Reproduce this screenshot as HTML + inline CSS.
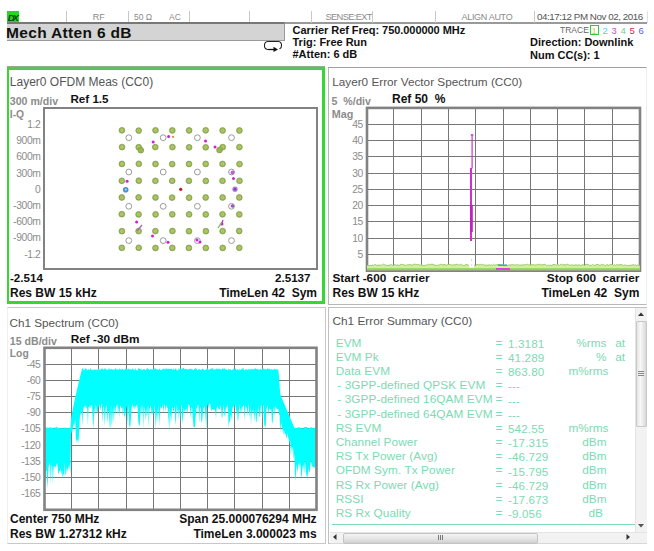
<!DOCTYPE html>
<html><head><meta charset="utf-8"><style>
html,body{margin:0;padding:0;background:#fff;width:654px;height:551px;overflow:hidden;position:relative;}
body{font-family:"Liberation Sans",sans-serif;}
.t{position:absolute;white-space:pre;}
</style></head><body>
<div style="position:absolute;left:7px;top:11px;width:640px;height:11px;background:#fff;"></div>
<div style="position:absolute;left:7px;top:22px;width:640px;height:1.5px;background:#9a9a9a;"></div>
<div style="position:absolute;left:7px;top:11px;width:12px;height:12.3px;background:#26d826;"></div>
<div class="t" style="left:7.8px;top:13.0px;font-size:9.5px;line-height:9.5px;font-weight:bold;color:#0b4a0b;letter-spacing:-2.2px;font-style:italic;">DX</div>
<div style="position:absolute;left:66.4px;top:11px;width:1px;height:11.5px;background:#c8c8c8;"></div>
<div style="position:absolute;left:128.4px;top:11px;width:1px;height:11.5px;background:#c8c8c8;"></div>
<div style="position:absolute;left:189.4px;top:11px;width:1px;height:11.5px;background:#c8c8c8;"></div>
<div style="position:absolute;left:249.4px;top:11px;width:1px;height:11.5px;background:#c8c8c8;"></div>
<div style="position:absolute;left:311.2px;top:11px;width:1px;height:11.5px;background:#c8c8c8;"></div>
<div style="position:absolute;left:372px;top:11px;width:1px;height:11.5px;background:#c8c8c8;"></div>
<div style="position:absolute;left:434.5px;top:11px;width:1px;height:11.5px;background:#c8c8c8;"></div>
<div style="position:absolute;left:534.3px;top:11px;width:1px;height:11.5px;background:#c8c8c8;"></div>
<div style="position:absolute;left:646.5px;top:11px;width:1px;height:12px;background:#e0e0e0;"></div>
<div class="t" style="left:92.7px;top:12.9px;font-size:9px;line-height:9px;font-weight:normal;color:#8a8a8a;">RF</div>
<div class="t" style="left:134.0px;top:13.0px;font-size:8.5px;line-height:8.5px;font-weight:normal;color:#8a8a8a;">50 &Omega;</div>
<div class="t" style="left:169.0px;top:13.0px;font-size:8.5px;line-height:8.5px;font-weight:normal;color:#8a8a8a;">AC</div>
<div class="t" style="left:325.5px;top:12.7px;font-size:9.3px;line-height:9.3px;font-weight:normal;color:#8a8a8a;letter-spacing:-0.65px;">SENSE:EXT</div>
<div class="t" style="left:461.5px;top:12.9px;font-size:9px;line-height:9px;font-weight:normal;color:#8a8a8a;letter-spacing:-0.3px;">ALIGN AUTO</div>
<div class="t" style="left:537.0px;top:11.8px;font-size:9.8px;line-height:9.8px;font-weight:normal;color:#555;letter-spacing:-0.45px;">04:17:12 PM Nov 02, 2016</div>
<div style="position:absolute;left:7px;top:22.3px;width:278px;height:18.7px;background:#d4d4d4;border-top:2.4px solid #787878;border-bottom:1.5px solid #9a9a9a;border-right:1.5px solid #9a9a9a;box-sizing:border-box;"></div>
<div class="t" style="left:6.0px;top:24.9px;font-size:15.5px;line-height:15.5px;font-weight:bold;color:#111;letter-spacing:0.33px;">Mech Atten 6 dB</div>
<svg style="position:absolute;left:263px;top:40px" width="22" height="12" viewBox="0 0 22 12"><path d="M6 9.5 H4.5 A3.5 3.5 0 0 1 1.5 5.5 A3.5 3.5 0 0 1 4.5 1.5 H15.5 A3.5 3.5 0 0 1 18.5 5.5 A3.5 3.5 0 0 1 16.5 9" fill="none" stroke="#222" stroke-width="1.1"/><path d="M5.5 9.5 H11" stroke="#111" stroke-width="1.3"/><path d="M10.5 6.8 L15 9.5 L10.5 12 Z" fill="#111"/></svg>
<div class="t" style="left:292.5px;top:24.5px;font-size:11px;line-height:11px;font-weight:bold;color:#111;letter-spacing:-0.05px;">Carrier Ref Freq: 750.000000 MHz</div>
<div class="t" style="left:292.5px;top:36.7px;font-size:11px;line-height:11px;font-weight:bold;color:#111;">Trig: Free Run</div>
<div class="t" style="left:292.5px;top:49.4px;font-size:11px;line-height:11px;font-weight:bold;color:#111;">#Atten: 6 dB</div>
<div class="t" style="left:560.0px;top:26.3px;font-size:8.5px;line-height:8.5px;font-weight:normal;color:#666;">TRACE</div>
<div style="position:absolute;left:589.5px;top:24.5px;width:9px;height:10px;border:1.5px solid #33cc33;box-sizing:border-box;"></div>
<div class="t" style="left:591.5px;top:25.5px;font-size:9.5px;line-height:9.5px;font-weight:normal;color:#d8c860;">1</div>
<div class="t" style="left:602.5px;top:25.5px;font-size:9.5px;line-height:9.5px;font-weight:normal;color:#60c8e0;">2</div>
<div class="t" style="left:611.5px;top:25.5px;font-size:9.5px;line-height:9.5px;font-weight:normal;color:#d050c0;">3</div>
<div class="t" style="left:620.5px;top:25.5px;font-size:9.5px;line-height:9.5px;font-weight:normal;color:#70d0a0;">4</div>
<div class="t" style="left:629.5px;top:25.5px;font-size:9.5px;line-height:9.5px;font-weight:normal;color:#c03050;">5</div>
<div class="t" style="left:638.5px;top:25.5px;font-size:9.5px;line-height:9.5px;font-weight:normal;color:#6060d0;">6</div>
<div class="t" style="left:530.0px;top:37.3px;font-size:11px;line-height:11px;font-weight:bold;color:#111;">Direction: Downlink</div>
<div class="t" style="left:530.0px;top:50.0px;font-size:11px;line-height:11px;font-weight:bold;color:#111;">Num CC(s): 1</div>
<div style="position:absolute;left:7px;top:66px;width:318px;height:237.5px;border:3px solid #33d833;border-left-width:2.5px;border-top:4px solid #58c458;box-sizing:border-box;"></div>
<div style="position:absolute;left:7px;top:66px;width:318px;height:1px;background:#90b090;"></div>
<div style="position:absolute;left:328px;top:66.5px;width:319px;height:238px;border:1.2px solid #b8b8b8;border-top:1.5px solid #a0a0a0;border-right-color:#eeeeee;box-sizing:border-box;"></div>
<div style="position:absolute;left:7px;top:306.5px;width:318.5px;height:237px;border:1.2px solid #c8c8c8;border-left-color:#f0f0f0;box-sizing:border-box;"></div>
<div style="position:absolute;left:328px;top:306.5px;width:319px;height:237px;border:1.2px solid #c0c0c0;box-sizing:border-box;"></div>
<div class="t" style="left:9.8px;top:76.1px;font-size:12px;line-height:12px;font-weight:normal;color:#555;">Layer0 OFDM Meas (CC0)</div>
<div class="t" style="left:9.8px;top:96.0px;font-size:10.6px;line-height:10.6px;font-weight:bold;color:#8c8c8c;">300 m/div</div>
<div class="t" style="left:9.8px;top:109.6px;font-size:10.3px;line-height:10.3px;font-weight:bold;color:#8c8c8c;">I-Q</div>
<div class="t" style="left:70.5px;top:92.9px;font-size:11.6px;line-height:11.6px;font-weight:bold;color:#111;">Ref 1.5</div>
<div style="position:absolute;left:43.2px;top:107.2px;width:274.8px;height:163.3px;border:2.8px solid #828282;box-sizing:border-box;background:#fff;"></div>
<div class="t" style="right:613.5px;top:119.8px;font-size:10.3px;line-height:10.3px;font-weight:normal;color:#8c8c8c;letter-spacing:-0.35px;">1.2</div>
<div class="t" style="right:613.5px;top:136.0px;font-size:10.3px;line-height:10.3px;font-weight:normal;color:#8c8c8c;letter-spacing:-0.35px;">900m</div>
<div class="t" style="right:613.5px;top:152.2px;font-size:10.3px;line-height:10.3px;font-weight:normal;color:#8c8c8c;letter-spacing:-0.35px;">600m</div>
<div class="t" style="right:613.5px;top:168.5px;font-size:10.3px;line-height:10.3px;font-weight:normal;color:#8c8c8c;letter-spacing:-0.35px;">300m</div>
<div class="t" style="right:613.5px;top:184.7px;font-size:10.3px;line-height:10.3px;font-weight:normal;color:#8c8c8c;letter-spacing:-0.35px;">0</div>
<div class="t" style="right:613.5px;top:200.9px;font-size:10.3px;line-height:10.3px;font-weight:normal;color:#8c8c8c;letter-spacing:-0.35px;">-300m</div>
<div class="t" style="right:613.5px;top:217.1px;font-size:10.3px;line-height:10.3px;font-weight:normal;color:#8c8c8c;letter-spacing:-0.35px;">-600m</div>
<div class="t" style="right:613.5px;top:233.3px;font-size:10.3px;line-height:10.3px;font-weight:normal;color:#8c8c8c;letter-spacing:-0.35px;">-900m</div>
<div class="t" style="right:613.5px;top:249.6px;font-size:10.3px;line-height:10.3px;font-weight:normal;color:#8c8c8c;letter-spacing:-0.35px;">-1.2</div>
<div class="t" style="left:10.0px;top:272.4px;font-size:11.6px;line-height:11.6px;font-weight:bold;color:#111;">-2.514</div>
<div class="t" style="right:343.5px;top:272.4px;font-size:11.6px;line-height:11.6px;font-weight:bold;color:#111;">2.5137</div>
<div class="t" style="left:10.0px;top:287.3px;font-size:12px;line-height:12px;font-weight:bold;color:#111;">Res BW 15 kHz</div>
<div class="t" style="right:337.0px;top:287.4px;font-size:12px;line-height:12px;font-weight:bold;color:#111;">TimeLen 42&nbsp; Sym</div>
<svg style="position:absolute;left:0;top:0" width="654" height="551"><circle cx="121.9" cy="130.3" r="2.9" fill="#9ab652" stroke="#7f9a4a" stroke-width="0.7"/><circle cx="121.9" cy="130.3" r="1.2" fill="none" stroke="#c0d880" stroke-width="0.7"/><circle cx="122.0" cy="147.1" r="2.9" fill="#9ab652" stroke="#7f9a4a" stroke-width="0.7"/><circle cx="122.0" cy="147.1" r="1.2" fill="none" stroke="#c0d880" stroke-width="0.7"/><circle cx="121.9" cy="163.9" r="2.9" fill="#9ab652" stroke="#7f9a4a" stroke-width="0.7"/><circle cx="121.9" cy="163.9" r="1.2" fill="none" stroke="#c0d880" stroke-width="0.7"/><circle cx="121.8" cy="180.8" r="2.9" fill="#9ab652" stroke="#7f9a4a" stroke-width="0.7"/><circle cx="121.8" cy="180.8" r="1.2" fill="none" stroke="#c0d880" stroke-width="0.7"/><circle cx="121.8" cy="197.5" r="2.9" fill="#9ab652" stroke="#7f9a4a" stroke-width="0.7"/><circle cx="121.8" cy="197.5" r="1.2" fill="none" stroke="#c0d880" stroke-width="0.7"/><circle cx="121.8" cy="214.2" r="2.9" fill="#9ab652" stroke="#7f9a4a" stroke-width="0.7"/><circle cx="121.8" cy="214.2" r="1.2" fill="none" stroke="#c0d880" stroke-width="0.7"/><circle cx="121.9" cy="231.2" r="2.9" fill="#9ab652" stroke="#7f9a4a" stroke-width="0.7"/><circle cx="121.9" cy="231.2" r="1.2" fill="none" stroke="#c0d880" stroke-width="0.7"/><circle cx="121.8" cy="247.8" r="2.9" fill="#9ab652" stroke="#7f9a4a" stroke-width="0.7"/><circle cx="121.8" cy="247.8" r="1.2" fill="none" stroke="#c0d880" stroke-width="0.7"/><circle cx="138.7" cy="130.6" r="2.9" fill="#9ab652" stroke="#7f9a4a" stroke-width="0.7"/><circle cx="138.7" cy="130.6" r="1.2" fill="none" stroke="#c0d880" stroke-width="0.7"/><circle cx="138.7" cy="147.2" r="2.9" fill="#9ab652" stroke="#7f9a4a" stroke-width="0.7"/><circle cx="138.7" cy="147.2" r="1.2" fill="none" stroke="#c0d880" stroke-width="0.7"/><circle cx="138.8" cy="163.8" r="2.9" fill="#9ab652" stroke="#7f9a4a" stroke-width="0.7"/><circle cx="138.8" cy="163.8" r="1.2" fill="none" stroke="#c0d880" stroke-width="0.7"/><circle cx="138.8" cy="180.7" r="2.9" fill="#9ab652" stroke="#7f9a4a" stroke-width="0.7"/><circle cx="138.8" cy="180.7" r="1.2" fill="none" stroke="#c0d880" stroke-width="0.7"/><circle cx="138.6" cy="197.4" r="2.9" fill="#9ab652" stroke="#7f9a4a" stroke-width="0.7"/><circle cx="138.6" cy="197.4" r="1.2" fill="none" stroke="#c0d880" stroke-width="0.7"/><circle cx="138.6" cy="214.4" r="2.9" fill="#9ab652" stroke="#7f9a4a" stroke-width="0.7"/><circle cx="138.6" cy="214.4" r="1.2" fill="none" stroke="#c0d880" stroke-width="0.7"/><circle cx="138.6" cy="231.1" r="2.9" fill="#9ab652" stroke="#7f9a4a" stroke-width="0.7"/><circle cx="138.6" cy="231.1" r="1.2" fill="none" stroke="#c0d880" stroke-width="0.7"/><circle cx="138.7" cy="247.8" r="2.9" fill="#9ab652" stroke="#7f9a4a" stroke-width="0.7"/><circle cx="138.7" cy="247.8" r="1.2" fill="none" stroke="#c0d880" stroke-width="0.7"/><circle cx="155.5" cy="130.3" r="2.9" fill="#9ab652" stroke="#7f9a4a" stroke-width="0.7"/><circle cx="155.5" cy="130.3" r="1.2" fill="none" stroke="#c0d880" stroke-width="0.7"/><circle cx="155.3" cy="147.1" r="2.9" fill="#9ab652" stroke="#7f9a4a" stroke-width="0.7"/><circle cx="155.3" cy="147.1" r="1.2" fill="none" stroke="#c0d880" stroke-width="0.7"/><circle cx="155.5" cy="164.0" r="2.9" fill="#9ab652" stroke="#7f9a4a" stroke-width="0.7"/><circle cx="155.5" cy="164.0" r="1.2" fill="none" stroke="#c0d880" stroke-width="0.7"/><circle cx="155.4" cy="180.8" r="2.9" fill="#9ab652" stroke="#7f9a4a" stroke-width="0.7"/><circle cx="155.4" cy="180.8" r="1.2" fill="none" stroke="#c0d880" stroke-width="0.7"/><circle cx="155.5" cy="197.5" r="2.9" fill="#9ab652" stroke="#7f9a4a" stroke-width="0.7"/><circle cx="155.5" cy="197.5" r="1.2" fill="none" stroke="#c0d880" stroke-width="0.7"/><circle cx="155.6" cy="214.4" r="2.9" fill="#9ab652" stroke="#7f9a4a" stroke-width="0.7"/><circle cx="155.6" cy="214.4" r="1.2" fill="none" stroke="#c0d880" stroke-width="0.7"/><circle cx="155.4" cy="231.1" r="2.9" fill="#9ab652" stroke="#7f9a4a" stroke-width="0.7"/><circle cx="155.4" cy="231.1" r="1.2" fill="none" stroke="#c0d880" stroke-width="0.7"/><circle cx="155.5" cy="248.0" r="2.9" fill="#9ab652" stroke="#7f9a4a" stroke-width="0.7"/><circle cx="155.5" cy="248.0" r="1.2" fill="none" stroke="#c0d880" stroke-width="0.7"/><circle cx="172.3" cy="130.4" r="2.9" fill="#9ab652" stroke="#7f9a4a" stroke-width="0.7"/><circle cx="172.3" cy="130.4" r="1.2" fill="none" stroke="#c0d880" stroke-width="0.7"/><circle cx="172.4" cy="147.1" r="2.9" fill="#9ab652" stroke="#7f9a4a" stroke-width="0.7"/><circle cx="172.4" cy="147.1" r="1.2" fill="none" stroke="#c0d880" stroke-width="0.7"/><circle cx="172.2" cy="164.1" r="2.9" fill="#9ab652" stroke="#7f9a4a" stroke-width="0.7"/><circle cx="172.2" cy="164.1" r="1.2" fill="none" stroke="#c0d880" stroke-width="0.7"/><circle cx="172.2" cy="180.8" r="2.9" fill="#9ab652" stroke="#7f9a4a" stroke-width="0.7"/><circle cx="172.2" cy="180.8" r="1.2" fill="none" stroke="#c0d880" stroke-width="0.7"/><circle cx="172.1" cy="197.6" r="2.9" fill="#9ab652" stroke="#7f9a4a" stroke-width="0.7"/><circle cx="172.1" cy="197.6" r="1.2" fill="none" stroke="#c0d880" stroke-width="0.7"/><circle cx="172.3" cy="214.3" r="2.9" fill="#9ab652" stroke="#7f9a4a" stroke-width="0.7"/><circle cx="172.3" cy="214.3" r="1.2" fill="none" stroke="#c0d880" stroke-width="0.7"/><circle cx="172.4" cy="231.0" r="2.9" fill="#9ab652" stroke="#7f9a4a" stroke-width="0.7"/><circle cx="172.4" cy="231.0" r="1.2" fill="none" stroke="#c0d880" stroke-width="0.7"/><circle cx="172.3" cy="247.9" r="2.9" fill="#9ab652" stroke="#7f9a4a" stroke-width="0.7"/><circle cx="172.3" cy="247.9" r="1.2" fill="none" stroke="#c0d880" stroke-width="0.7"/><circle cx="189.1" cy="130.4" r="2.9" fill="#9ab652" stroke="#7f9a4a" stroke-width="0.7"/><circle cx="189.1" cy="130.4" r="1.2" fill="none" stroke="#c0d880" stroke-width="0.7"/><circle cx="189.1" cy="147.3" r="2.9" fill="#9ab652" stroke="#7f9a4a" stroke-width="0.7"/><circle cx="189.1" cy="147.3" r="1.2" fill="none" stroke="#c0d880" stroke-width="0.7"/><circle cx="189.0" cy="164.0" r="2.9" fill="#9ab652" stroke="#7f9a4a" stroke-width="0.7"/><circle cx="189.0" cy="164.0" r="1.2" fill="none" stroke="#c0d880" stroke-width="0.7"/><circle cx="188.9" cy="180.8" r="2.9" fill="#9ab652" stroke="#7f9a4a" stroke-width="0.7"/><circle cx="188.9" cy="180.8" r="1.2" fill="none" stroke="#c0d880" stroke-width="0.7"/><circle cx="189.1" cy="197.7" r="2.9" fill="#9ab652" stroke="#7f9a4a" stroke-width="0.7"/><circle cx="189.1" cy="197.7" r="1.2" fill="none" stroke="#c0d880" stroke-width="0.7"/><circle cx="189.1" cy="214.3" r="2.9" fill="#9ab652" stroke="#7f9a4a" stroke-width="0.7"/><circle cx="189.1" cy="214.3" r="1.2" fill="none" stroke="#c0d880" stroke-width="0.7"/><circle cx="189.0" cy="231.2" r="2.9" fill="#9ab652" stroke="#7f9a4a" stroke-width="0.7"/><circle cx="189.0" cy="231.2" r="1.2" fill="none" stroke="#c0d880" stroke-width="0.7"/><circle cx="188.9" cy="247.9" r="2.9" fill="#9ab652" stroke="#7f9a4a" stroke-width="0.7"/><circle cx="188.9" cy="247.9" r="1.2" fill="none" stroke="#c0d880" stroke-width="0.7"/><circle cx="205.7" cy="130.3" r="2.9" fill="#9ab652" stroke="#7f9a4a" stroke-width="0.7"/><circle cx="205.7" cy="130.3" r="1.2" fill="none" stroke="#c0d880" stroke-width="0.7"/><circle cx="205.7" cy="147.3" r="2.9" fill="#9ab652" stroke="#7f9a4a" stroke-width="0.7"/><circle cx="205.7" cy="147.3" r="1.2" fill="none" stroke="#c0d880" stroke-width="0.7"/><circle cx="205.7" cy="163.9" r="2.9" fill="#9ab652" stroke="#7f9a4a" stroke-width="0.7"/><circle cx="205.7" cy="163.9" r="1.2" fill="none" stroke="#c0d880" stroke-width="0.7"/><circle cx="205.8" cy="180.9" r="2.9" fill="#9ab652" stroke="#7f9a4a" stroke-width="0.7"/><circle cx="205.8" cy="180.9" r="1.2" fill="none" stroke="#c0d880" stroke-width="0.7"/><circle cx="205.7" cy="197.5" r="2.9" fill="#9ab652" stroke="#7f9a4a" stroke-width="0.7"/><circle cx="205.7" cy="197.5" r="1.2" fill="none" stroke="#c0d880" stroke-width="0.7"/><circle cx="205.8" cy="214.4" r="2.9" fill="#9ab652" stroke="#7f9a4a" stroke-width="0.7"/><circle cx="205.8" cy="214.4" r="1.2" fill="none" stroke="#c0d880" stroke-width="0.7"/><circle cx="205.9" cy="231.2" r="2.9" fill="#9ab652" stroke="#7f9a4a" stroke-width="0.7"/><circle cx="205.9" cy="231.2" r="1.2" fill="none" stroke="#c0d880" stroke-width="0.7"/><circle cx="205.8" cy="247.9" r="2.9" fill="#9ab652" stroke="#7f9a4a" stroke-width="0.7"/><circle cx="205.8" cy="247.9" r="1.2" fill="none" stroke="#c0d880" stroke-width="0.7"/><circle cx="222.6" cy="130.5" r="2.9" fill="#9ab652" stroke="#7f9a4a" stroke-width="0.7"/><circle cx="222.6" cy="130.5" r="1.2" fill="none" stroke="#c0d880" stroke-width="0.7"/><circle cx="222.7" cy="147.1" r="2.9" fill="#9ab652" stroke="#7f9a4a" stroke-width="0.7"/><circle cx="222.7" cy="147.1" r="1.2" fill="none" stroke="#c0d880" stroke-width="0.7"/><circle cx="222.5" cy="163.9" r="2.9" fill="#9ab652" stroke="#7f9a4a" stroke-width="0.7"/><circle cx="222.5" cy="163.9" r="1.2" fill="none" stroke="#c0d880" stroke-width="0.7"/><circle cx="222.5" cy="180.8" r="2.9" fill="#9ab652" stroke="#7f9a4a" stroke-width="0.7"/><circle cx="222.5" cy="180.8" r="1.2" fill="none" stroke="#c0d880" stroke-width="0.7"/><circle cx="222.6" cy="197.5" r="2.9" fill="#9ab652" stroke="#7f9a4a" stroke-width="0.7"/><circle cx="222.6" cy="197.5" r="1.2" fill="none" stroke="#c0d880" stroke-width="0.7"/><circle cx="222.5" cy="214.3" r="2.9" fill="#9ab652" stroke="#7f9a4a" stroke-width="0.7"/><circle cx="222.5" cy="214.3" r="1.2" fill="none" stroke="#c0d880" stroke-width="0.7"/><circle cx="222.6" cy="231.1" r="2.9" fill="#9ab652" stroke="#7f9a4a" stroke-width="0.7"/><circle cx="222.6" cy="231.1" r="1.2" fill="none" stroke="#c0d880" stroke-width="0.7"/><circle cx="222.7" cy="247.9" r="2.9" fill="#9ab652" stroke="#7f9a4a" stroke-width="0.7"/><circle cx="222.7" cy="247.9" r="1.2" fill="none" stroke="#c0d880" stroke-width="0.7"/><circle cx="239.4" cy="130.5" r="2.9" fill="#9ab652" stroke="#7f9a4a" stroke-width="0.7"/><circle cx="239.4" cy="130.5" r="1.2" fill="none" stroke="#c0d880" stroke-width="0.7"/><circle cx="239.4" cy="147.1" r="2.9" fill="#9ab652" stroke="#7f9a4a" stroke-width="0.7"/><circle cx="239.4" cy="147.1" r="1.2" fill="none" stroke="#c0d880" stroke-width="0.7"/><circle cx="239.5" cy="164.1" r="2.9" fill="#9ab652" stroke="#7f9a4a" stroke-width="0.7"/><circle cx="239.5" cy="164.1" r="1.2" fill="none" stroke="#c0d880" stroke-width="0.7"/><circle cx="239.5" cy="180.8" r="2.9" fill="#9ab652" stroke="#7f9a4a" stroke-width="0.7"/><circle cx="239.5" cy="180.8" r="1.2" fill="none" stroke="#c0d880" stroke-width="0.7"/><circle cx="239.3" cy="197.5" r="2.9" fill="#9ab652" stroke="#7f9a4a" stroke-width="0.7"/><circle cx="239.3" cy="197.5" r="1.2" fill="none" stroke="#c0d880" stroke-width="0.7"/><circle cx="239.3" cy="214.4" r="2.9" fill="#9ab652" stroke="#7f9a4a" stroke-width="0.7"/><circle cx="239.3" cy="214.4" r="1.2" fill="none" stroke="#c0d880" stroke-width="0.7"/><circle cx="239.2" cy="231.0" r="2.9" fill="#9ab652" stroke="#7f9a4a" stroke-width="0.7"/><circle cx="239.2" cy="231.0" r="1.2" fill="none" stroke="#c0d880" stroke-width="0.7"/><circle cx="239.3" cy="247.8" r="2.9" fill="#9ab652" stroke="#7f9a4a" stroke-width="0.7"/><circle cx="239.3" cy="247.8" r="1.2" fill="none" stroke="#c0d880" stroke-width="0.7"/><circle cx="128.8" cy="137.7" r="2.9" fill="#fff" stroke="#9a9a9a" stroke-width="1"/><circle cx="128.8" cy="172.0" r="2.9" fill="#fff" stroke="#9a9a9a" stroke-width="1"/><circle cx="128.8" cy="206.3" r="2.9" fill="#fff" stroke="#9a9a9a" stroke-width="1"/><circle cx="128.8" cy="240.6" r="2.9" fill="#fff" stroke="#9a9a9a" stroke-width="1"/><circle cx="163.2" cy="137.7" r="2.9" fill="#fff" stroke="#9a9a9a" stroke-width="1"/><circle cx="163.2" cy="172.0" r="2.9" fill="#fff" stroke="#9a9a9a" stroke-width="1"/><circle cx="163.2" cy="206.3" r="2.9" fill="#fff" stroke="#9a9a9a" stroke-width="1"/><circle cx="163.2" cy="240.6" r="2.9" fill="#fff" stroke="#9a9a9a" stroke-width="1"/><circle cx="197.4" cy="137.7" r="2.9" fill="#fff" stroke="#9a9a9a" stroke-width="1"/><circle cx="197.4" cy="172.0" r="2.9" fill="#fff" stroke="#9a9a9a" stroke-width="1"/><circle cx="197.4" cy="206.3" r="2.9" fill="#fff" stroke="#9a9a9a" stroke-width="1"/><circle cx="197.4" cy="240.6" r="2.9" fill="#fff" stroke="#9a9a9a" stroke-width="1"/><circle cx="231.5" cy="137.7" r="2.9" fill="#fff" stroke="#9a9a9a" stroke-width="1"/><circle cx="231.5" cy="172.0" r="2.9" fill="#fff" stroke="#9a9a9a" stroke-width="1"/><circle cx="231.5" cy="206.3" r="2.9" fill="#fff" stroke="#9a9a9a" stroke-width="1"/><circle cx="231.5" cy="240.6" r="2.9" fill="#fff" stroke="#9a9a9a" stroke-width="1"/><circle cx="168.6" cy="136.5" r="1.5" fill="#d020d0"/><circle cx="153.2" cy="142.1" r="1.5" fill="#d020d0"/><circle cx="127.1" cy="181.3" r="1.5" fill="#d020d0"/><circle cx="136.6" cy="222" r="1.5" fill="#d020d0"/><circle cx="152.5" cy="236.1" r="1.5" fill="#d020d0"/><circle cx="168" cy="242.3" r="1.5" fill="#d020d0"/><circle cx="205.5" cy="141" r="1.5" fill="#d020d0"/><circle cx="215" cy="147" r="1.5" fill="#d020d0"/><circle cx="233.5" cy="178.5" r="1.5" fill="#d020d0"/><circle cx="197" cy="240" r="1.5" fill="#d020d0"/><circle cx="200" cy="242" r="1.5" fill="#d020d0"/><circle cx="222" cy="224" r="1.5" fill="#d020d0"/><circle cx="235" cy="189.2" r="2.6" fill="#a878d8"/><circle cx="235" cy="189.2" r="1.2" fill="#8040b0"/><circle cx="232.5" cy="172.5" r="2" fill="#c060d8"/><circle cx="232.5" cy="206" r="1.8" fill="#a050c8"/><circle cx="125.7" cy="189.7" r="2.8" fill="#4a90d0"/><circle cx="125.7" cy="189.7" r="1.1" fill="#a8d0f0"/><circle cx="140.8" cy="150.2" r="2.9" fill="#9ab652" stroke="#7f9a4a" stroke-width="0.7"/><circle cx="219.5" cy="150.0" r="2.9" fill="#9ab652" stroke="#7f9a4a" stroke-width="0.7"/><path d="M137 231 L142 225" stroke="#b060c0" stroke-width="1.3"/><path d="M218 228 L222 222" stroke="#60c040" stroke-width="1.3"/><path d="M222 223 L223 220" stroke="#c030c0" stroke-width="1.2"/><circle cx="180.7" cy="189.3" r="1.6" fill="#d01010"/><circle cx="173" cy="136.8" r="1.1" fill="#e08040"/></svg>
<div class="t" style="left:332.2px;top:76.2px;font-size:11.75px;line-height:11.75px;font-weight:normal;color:#555;">Layer0 Error Vector Spectrum (CC0)</div>
<div class="t" style="left:331.5px;top:96.0px;font-size:10.6px;line-height:10.6px;font-weight:bold;color:#8c8c8c;">5 &nbsp;%/div</div>
<div class="t" style="left:331.8px;top:109.2px;font-size:10.8px;line-height:10.8px;font-weight:bold;color:#8c8c8c;">Mag</div>
<div class="t" style="left:392.0px;top:93.3px;font-size:12px;line-height:12px;font-weight:bold;color:#111;">Ref 50&nbsp; %</div>
<svg style="position:absolute;left:0;top:0" width="654" height="551"><line x1="393.5" y1="107.9" x2="393.5" y2="270.70000000000005" stroke="#777" stroke-width="1"/><line x1="421.5" y1="107.9" x2="421.5" y2="270.70000000000005" stroke="#777" stroke-width="1"/><line x1="448.5" y1="107.9" x2="448.5" y2="270.70000000000005" stroke="#777" stroke-width="1"/><line x1="475.5" y1="107.9" x2="475.5" y2="270.70000000000005" stroke="#777" stroke-width="1"/><line x1="503.5" y1="107.9" x2="503.5" y2="270.70000000000005" stroke="#777" stroke-width="1"/><line x1="530.5" y1="107.9" x2="530.5" y2="270.70000000000005" stroke="#777" stroke-width="1"/><line x1="557.5" y1="107.9" x2="557.5" y2="270.70000000000005" stroke="#777" stroke-width="1"/><line x1="584.5" y1="107.9" x2="584.5" y2="270.70000000000005" stroke="#777" stroke-width="1"/><line x1="612.5" y1="107.9" x2="612.5" y2="270.70000000000005" stroke="#777" stroke-width="1"/><line x1="367" y1="124.5" x2="640" y2="124.5" stroke="#777" stroke-width="1"/><line x1="367" y1="140.5" x2="640" y2="140.5" stroke="#777" stroke-width="1"/><line x1="367" y1="156.5" x2="640" y2="156.5" stroke="#777" stroke-width="1"/><line x1="367" y1="173.5" x2="640" y2="173.5" stroke="#777" stroke-width="1"/><line x1="367" y1="189.5" x2="640" y2="189.5" stroke="#777" stroke-width="1"/><line x1="367" y1="205.5" x2="640" y2="205.5" stroke="#777" stroke-width="1"/><line x1="367" y1="221.5" x2="640" y2="221.5" stroke="#777" stroke-width="1"/><line x1="367" y1="238.5" x2="640" y2="238.5" stroke="#777" stroke-width="1"/><line x1="367" y1="254.5" x2="640" y2="254.5" stroke="#777" stroke-width="1"/><rect x="367" y="107.9" width="273" height="162.8" fill="none" stroke="#828282" stroke-width="2.6"/><polygon points="367.0,265.1 368.1,265.5 369.2,265.6 370.3,265.4 371.4,265.5 372.5,265.1 373.6,265.6 374.7,264.4 375.8,264.7 376.9,265.4 378.0,265.2 379.1,265.1 380.2,265.1 381.3,265.4 382.4,264.4 383.5,264.2 384.6,264.9 385.7,264.9 386.8,265.5 387.9,265.5 389.0,265.1 390.1,265.2 391.2,264.4 392.3,265.4 393.4,265.6 394.5,264.3 395.6,264.9 396.7,265.4 397.8,264.8 398.9,265.6 400.0,264.9 401.1,264.2 402.2,264.4 403.3,264.6 404.4,265.2 405.5,265.1 406.6,265.4 407.7,264.5 408.8,264.9 409.9,264.5 411.0,265.1 412.1,265.3 413.2,264.5 414.3,264.2 415.4,264.4 416.5,264.5 417.6,264.5 418.7,264.6 419.8,265.3 420.9,264.9 422.0,265.1 423.1,265.6 424.2,265.6 425.3,265.2 426.4,265.2 427.5,264.6 428.6,264.3 429.7,265.0 430.8,264.3 431.9,264.2 433.0,264.3 434.1,265.1 435.2,265.3 436.3,265.3 437.4,265.3 438.5,265.3 439.6,264.7 440.7,264.3 441.8,264.4 442.9,264.9 444.0,264.7 445.1,264.5 446.2,265.5 447.3,264.7 448.4,264.3 449.5,264.5 450.6,264.5 451.7,264.9 452.8,265.4 453.9,264.5 455.0,265.1 456.1,264.5 457.2,264.2 458.3,265.0 459.4,265.0 460.5,264.3 461.6,264.6 462.7,265.4 463.8,265.4 464.9,265.4 466.0,264.3 467.1,264.5 468.2,265.4 469.3,264.4 470.4,264.2 471.5,264.7 472.6,265.1 473.7,264.8 474.8,265.4 475.9,265.6 477.0,264.2 478.1,264.7 479.2,264.9 480.3,264.3 481.4,265.0 482.5,264.4 483.6,264.4 484.7,265.3 485.8,265.2 486.9,265.2 488.0,265.3 489.1,264.8 490.2,265.2 491.3,265.0 492.4,265.4 493.5,264.3 494.6,265.1 495.7,265.0 496.8,264.8 497.9,264.3 499.0,265.0 500.1,264.3 501.2,264.9 502.3,264.9 503.4,264.9 504.5,265.6 505.6,265.0 506.7,265.3 507.8,265.6 508.9,264.5 510.0,265.4 511.1,264.9 512.2,264.6 513.3,264.8 514.4,265.1 515.5,264.9 516.6,264.8 517.7,264.5 518.8,265.5 519.9,264.8 521.0,265.3 522.1,265.2 523.2,264.5 524.3,264.9 525.4,264.8 526.5,264.5 527.6,264.3 528.7,265.0 529.8,264.7 530.9,264.9 532.0,264.9 533.1,264.6 534.2,265.0 535.3,264.9 536.4,264.9 537.5,264.3 538.6,264.6 539.7,264.4 540.8,264.3 541.9,265.2 543.0,264.8 544.1,264.3 545.2,264.4 546.3,265.4 547.4,265.4 548.5,265.0 549.6,265.5 550.7,265.3 551.8,265.5 552.9,264.7 554.0,264.5 555.1,264.3 556.2,265.4 557.3,264.6 558.4,264.7 559.5,265.4 560.6,264.4 561.7,264.2 562.8,265.3 563.9,264.3 565.0,265.0 566.1,264.9 567.2,264.2 568.3,264.4 569.4,265.4 570.5,265.0 571.6,264.9 572.7,265.1 573.8,265.3 574.9,265.2 576.0,264.6 577.1,265.6 578.2,264.8 579.3,265.0 580.4,265.6 581.5,265.1 582.6,264.7 583.7,264.9 584.8,265.5 585.9,264.2 587.0,264.5 588.1,264.2 589.2,265.5 590.3,265.2 591.4,265.5 592.5,264.5 593.6,265.2 594.7,265.4 595.8,265.0 596.9,264.3 598.0,264.5 599.1,265.2 600.2,265.4 601.3,264.3 602.4,264.8 603.5,264.6 604.6,265.5 605.7,265.5 606.8,264.6 607.9,265.0 609.0,265.5 610.1,264.3 611.2,264.7 612.3,264.5 613.4,265.5 614.5,264.4 615.6,265.5 616.7,264.4 617.8,265.0 618.9,265.1 620.0,264.8 621.1,264.3 622.2,265.2 623.3,265.4 624.4,264.9 625.5,265.3 626.6,265.4 627.7,265.4 628.8,265.5 629.9,265.3 631.0,265.2 632.1,265.2 633.2,264.5 634.3,265.2 635.4,264.9 636.5,265.4 637.6,265.1 638.7,265.6 639.8,265.2 640.0,270.2 367.0,270.2" fill="#d2eea0"/><polyline points="367.0,265.1 368.1,265.5 369.2,265.6 370.3,265.4 371.4,265.5 372.5,265.1 373.6,265.6 374.7,264.4 375.8,264.7 376.9,265.4 378.0,265.2 379.1,265.1 380.2,265.1 381.3,265.4 382.4,264.4 383.5,264.2 384.6,264.9 385.7,264.9 386.8,265.5 387.9,265.5 389.0,265.1 390.1,265.2 391.2,264.4 392.3,265.4 393.4,265.6 394.5,264.3 395.6,264.9 396.7,265.4 397.8,264.8 398.9,265.6 400.0,264.9 401.1,264.2 402.2,264.4 403.3,264.6 404.4,265.2 405.5,265.1 406.6,265.4 407.7,264.5 408.8,264.9 409.9,264.5 411.0,265.1 412.1,265.3 413.2,264.5 414.3,264.2 415.4,264.4 416.5,264.5 417.6,264.5 418.7,264.6 419.8,265.3 420.9,264.9 422.0,265.1 423.1,265.6 424.2,265.6 425.3,265.2 426.4,265.2 427.5,264.6 428.6,264.3 429.7,265.0 430.8,264.3 431.9,264.2 433.0,264.3 434.1,265.1 435.2,265.3 436.3,265.3 437.4,265.3 438.5,265.3 439.6,264.7 440.7,264.3 441.8,264.4 442.9,264.9 444.0,264.7 445.1,264.5 446.2,265.5 447.3,264.7 448.4,264.3 449.5,264.5 450.6,264.5 451.7,264.9 452.8,265.4 453.9,264.5 455.0,265.1 456.1,264.5 457.2,264.2 458.3,265.0 459.4,265.0 460.5,264.3 461.6,264.6 462.7,265.4 463.8,265.4 464.9,265.4 466.0,264.3 467.1,264.5 468.2,265.4 469.3,264.4 470.4,264.2 471.5,264.7 472.6,265.1 473.7,264.8 474.8,265.4 475.9,265.6 477.0,264.2 478.1,264.7 479.2,264.9 480.3,264.3 481.4,265.0 482.5,264.4 483.6,264.4 484.7,265.3 485.8,265.2 486.9,265.2 488.0,265.3 489.1,264.8 490.2,265.2 491.3,265.0 492.4,265.4 493.5,264.3 494.6,265.1 495.7,265.0 496.8,264.8 497.9,264.3 499.0,265.0 500.1,264.3 501.2,264.9 502.3,264.9 503.4,264.9 504.5,265.6 505.6,265.0 506.7,265.3 507.8,265.6 508.9,264.5 510.0,265.4 511.1,264.9 512.2,264.6 513.3,264.8 514.4,265.1 515.5,264.9 516.6,264.8 517.7,264.5 518.8,265.5 519.9,264.8 521.0,265.3 522.1,265.2 523.2,264.5 524.3,264.9 525.4,264.8 526.5,264.5 527.6,264.3 528.7,265.0 529.8,264.7 530.9,264.9 532.0,264.9 533.1,264.6 534.2,265.0 535.3,264.9 536.4,264.9 537.5,264.3 538.6,264.6 539.7,264.4 540.8,264.3 541.9,265.2 543.0,264.8 544.1,264.3 545.2,264.4 546.3,265.4 547.4,265.4 548.5,265.0 549.6,265.5 550.7,265.3 551.8,265.5 552.9,264.7 554.0,264.5 555.1,264.3 556.2,265.4 557.3,264.6 558.4,264.7 559.5,265.4 560.6,264.4 561.7,264.2 562.8,265.3 563.9,264.3 565.0,265.0 566.1,264.9 567.2,264.2 568.3,264.4 569.4,265.4 570.5,265.0 571.6,264.9 572.7,265.1 573.8,265.3 574.9,265.2 576.0,264.6 577.1,265.6 578.2,264.8 579.3,265.0 580.4,265.6 581.5,265.1 582.6,264.7 583.7,264.9 584.8,265.5 585.9,264.2 587.0,264.5 588.1,264.2 589.2,265.5 590.3,265.2 591.4,265.5 592.5,264.5 593.6,265.2 594.7,265.4 595.8,265.0 596.9,264.3 598.0,264.5 599.1,265.2 600.2,265.4 601.3,264.3 602.4,264.8 603.5,264.6 604.6,265.5 605.7,265.5 606.8,264.6 607.9,265.0 609.0,265.5 610.1,264.3 611.2,264.7 612.3,264.5 613.4,265.5 614.5,264.4 615.6,265.5 616.7,264.4 617.8,265.0 618.9,265.1 620.0,264.8 621.1,264.3 622.2,265.2 623.3,265.4 624.4,264.9 625.5,265.3 626.6,265.4 627.7,265.4 628.8,265.5 629.9,265.3 631.0,265.2 632.1,265.2 633.2,264.5 634.3,265.2 635.4,264.9 636.5,265.4 637.6,265.1 638.7,265.6 639.8,265.2" fill="none" stroke="#8cc84c" stroke-width="0.9"/><rect x="367" y="268.2" width="273" height="1.8" fill="#94d450"/><rect x="496" y="268" width="14" height="2" fill="#e040e0"/><rect x="498" y="264.5" width="9" height="1.5" fill="#40a0e0"/><rect x="471.5" y="134.5" width="1.2" height="34" fill="#cc33cc"/><rect x="470.8" y="134" width="2.5" height="2" fill="#cc55cc"/><line x1="471" y1="168" x2="471" y2="241" stroke="#d030d0" stroke-width="2"/><line x1="471.5" y1="205" x2="471.5" y2="232" stroke="#c020c0" stroke-width="2.6"/><rect x="469" y="258" width="5" height="9.5" fill="#fff"/><rect x="471.2" y="259" width="1" height="2" fill="#ccc"/><rect x="471.2" y="264" width="1" height="2" fill="#ddd"/></svg>
<div class="t" style="right:291.0px;top:119.8px;font-size:10.3px;line-height:10.3px;font-weight:normal;color:#8c8c8c;letter-spacing:-0.35px;">45</div>
<div class="t" style="right:291.0px;top:136.0px;font-size:10.3px;line-height:10.3px;font-weight:normal;color:#8c8c8c;letter-spacing:-0.35px;">40</div>
<div class="t" style="right:291.0px;top:152.3px;font-size:10.3px;line-height:10.3px;font-weight:normal;color:#8c8c8c;letter-spacing:-0.35px;">35</div>
<div class="t" style="right:291.0px;top:168.6px;font-size:10.3px;line-height:10.3px;font-weight:normal;color:#8c8c8c;letter-spacing:-0.35px;">30</div>
<div class="t" style="right:291.0px;top:184.9px;font-size:10.3px;line-height:10.3px;font-weight:normal;color:#8c8c8c;letter-spacing:-0.35px;">25</div>
<div class="t" style="right:291.0px;top:201.2px;font-size:10.3px;line-height:10.3px;font-weight:normal;color:#8c8c8c;letter-spacing:-0.35px;">20</div>
<div class="t" style="right:291.0px;top:217.4px;font-size:10.3px;line-height:10.3px;font-weight:normal;color:#8c8c8c;letter-spacing:-0.35px;">15</div>
<div class="t" style="right:291.0px;top:233.7px;font-size:10.3px;line-height:10.3px;font-weight:normal;color:#8c8c8c;letter-spacing:-0.35px;">10</div>
<div class="t" style="right:291.0px;top:250.0px;font-size:10.3px;line-height:10.3px;font-weight:normal;color:#8c8c8c;letter-spacing:-0.35px;">5</div>
<div class="t" style="left:332.5px;top:273.3px;font-size:11.8px;line-height:11.8px;font-weight:bold;color:#111;">Start -600&nbsp; carrier</div>
<div class="t" style="right:14.7px;top:273.3px;font-size:11.8px;line-height:11.8px;font-weight:bold;color:#111;">Stop 600&nbsp; carrier</div>
<div class="t" style="left:332.5px;top:287.2px;font-size:12px;line-height:12px;font-weight:bold;color:#111;">Res BW 15 kHz</div>
<div class="t" style="right:14.7px;top:287.3px;font-size:12px;line-height:12px;font-weight:bold;color:#111;">TimeLen 42&nbsp; Sym</div>
<div class="t" style="left:9.6px;top:316.6px;font-size:11.7px;line-height:11.7px;font-weight:normal;color:#555;">Ch1 Spectrum (CC0)</div>
<div class="t" style="left:9.8px;top:336.0px;font-size:10.6px;line-height:10.6px;font-weight:bold;color:#8c8c8c;">15 dB/div</div>
<div class="t" style="left:9.8px;top:348.8px;font-size:10.3px;line-height:10.3px;font-weight:bold;color:#8c8c8c;">Log</div>
<div class="t" style="left:70.7px;top:334.2px;font-size:11.8px;line-height:11.8px;font-weight:bold;color:#111;">Ref -30 dBm</div>
<svg style="position:absolute;left:0;top:0" width="654" height="551"><line x1="71.5" y1="347.8" x2="71.5" y2="509.8" stroke="#777" stroke-width="1"/><line x1="98.5" y1="347.8" x2="98.5" y2="509.8" stroke="#777" stroke-width="1"/><line x1="126.5" y1="347.8" x2="126.5" y2="509.8" stroke="#777" stroke-width="1"/><line x1="153.5" y1="347.8" x2="153.5" y2="509.8" stroke="#777" stroke-width="1"/><line x1="180.5" y1="347.8" x2="180.5" y2="509.8" stroke="#777" stroke-width="1"/><line x1="207.5" y1="347.8" x2="207.5" y2="509.8" stroke="#777" stroke-width="1"/><line x1="234.5" y1="347.8" x2="234.5" y2="509.8" stroke="#777" stroke-width="1"/><line x1="262.5" y1="347.8" x2="262.5" y2="509.8" stroke="#777" stroke-width="1"/><line x1="289.5" y1="347.8" x2="289.5" y2="509.8" stroke="#777" stroke-width="1"/><line x1="44.5" y1="364.5" x2="316.5" y2="364.5" stroke="#777" stroke-width="1"/><line x1="44.5" y1="380.5" x2="316.5" y2="380.5" stroke="#777" stroke-width="1"/><line x1="44.5" y1="396.5" x2="316.5" y2="396.5" stroke="#777" stroke-width="1"/><line x1="44.5" y1="412.5" x2="316.5" y2="412.5" stroke="#777" stroke-width="1"/><line x1="44.5" y1="428.5" x2="316.5" y2="428.5" stroke="#777" stroke-width="1"/><line x1="44.5" y1="445.5" x2="316.5" y2="445.5" stroke="#777" stroke-width="1"/><line x1="44.5" y1="461.5" x2="316.5" y2="461.5" stroke="#777" stroke-width="1"/><line x1="44.5" y1="477.5" x2="316.5" y2="477.5" stroke="#777" stroke-width="1"/><line x1="44.5" y1="493.5" x2="316.5" y2="493.5" stroke="#777" stroke-width="1"/><polygon points="44.5,426.8 45.2,427.2 45.9,427.0 46.6,427.8 47.3,427.8 48.0,427.5 48.7,428.1 49.4,426.9 50.1,428.3 50.8,427.0 51.5,428.1 52.2,427.4 52.9,427.7 53.6,428.7 54.3,428.7 55.0,426.8 55.7,427.8 56.4,426.8 57.1,427.6 57.8,427.4 58.5,427.9 59.2,428.2 59.9,427.5 60.6,428.2 61.3,428.5 62.0,428.3 62.7,427.8 63.4,428.4 64.1,428.6 64.8,427.3 65.5,427.5 66.2,427.9 66.9,428.2 67.6,428.4 68.3,427.9 69.0,428.3 69.7,427.3 70.4,428.3 71.1,418.6 71.8,414.5 72.5,410.8 73.2,407.2 73.9,403.8 74.6,400.5 75.3,397.3 76.0,394.2 76.7,391.1 77.4,388.0 78.1,385.0 78.8,382.1 79.5,379.2 80.2,376.3 80.9,373.4 81.6,370.6 82.3,368.4 83.0,368.3 83.7,370.2 84.4,370.2 85.1,368.0 85.8,368.8 86.5,368.8 87.2,369.9 87.9,370.3 88.6,368.7 89.3,370.5 90.0,369.1 90.7,368.3 91.4,370.3 92.1,369.3 92.8,370.4 93.5,369.6 94.2,369.4 94.9,369.8 95.6,369.6 96.3,370.3 97.0,368.9 97.7,370.4 98.4,368.8 99.1,368.4 99.8,370.3 100.5,370.3 101.2,368.3 101.9,368.9 102.6,368.6 103.3,369.9 104.0,369.3 104.7,368.2 105.4,368.3 106.1,370.2 106.8,368.6 107.5,370.4 108.2,368.1 108.9,370.2 109.6,368.0 110.3,370.1 111.0,368.6 111.7,369.3 112.4,369.8 113.1,369.1 113.8,370.0 114.5,369.6 115.2,368.6 115.9,368.3 116.6,369.5 117.3,369.5 118.0,369.2 118.7,370.2 119.4,368.6 120.1,368.8 120.8,369.7 121.5,369.7 122.2,368.1 122.9,369.7 123.6,369.8 124.3,370.4 125.0,368.6 125.7,368.7 126.4,368.5 127.1,369.7 127.8,369.0 128.5,368.4 129.2,369.0 129.9,369.8 130.6,368.8 131.3,369.9 132.0,368.9 132.7,368.4 133.4,368.9 134.1,370.4 134.8,370.1 135.5,368.1 136.2,370.3 136.9,370.2 137.6,370.0 138.3,368.1 139.0,368.6 139.7,368.8 140.4,369.5 141.1,368.8 141.8,369.9 142.5,370.4 143.2,369.2 143.9,369.0 144.6,369.2 145.3,370.0 146.0,369.9 146.7,368.8 147.4,368.2 148.1,368.6 148.8,369.4 149.5,370.2 150.2,368.2 150.9,369.8 151.6,369.0 152.3,369.9 153.0,368.3 153.7,369.4 154.4,368.5 155.1,368.4 155.8,368.8 156.5,369.3 157.2,369.6 157.9,369.2 158.6,370.3 159.3,368.3 160.0,369.5 160.7,370.2 161.4,369.9 162.1,369.5 162.8,368.9 163.5,368.6 164.2,368.5 164.9,369.7 165.6,368.5 166.3,368.2 167.0,369.4 167.7,368.4 168.4,368.7 169.1,368.8 169.8,369.0 170.5,368.9 171.2,368.5 171.9,369.1 172.6,370.2 173.3,368.0 174.0,370.3 174.7,368.9 175.4,368.7 176.1,368.3 176.8,370.4 177.5,370.4 178.2,368.1 178.9,370.3 179.6,368.4 180.3,369.0 181.0,368.5 181.7,369.3 182.4,368.6 183.1,368.1 183.8,368.1 184.5,369.5 185.2,368.8 185.9,369.1 186.6,369.1 187.3,369.2 188.0,369.9 188.7,369.2 189.4,369.1 190.1,369.3 190.8,368.2 191.5,369.3 192.2,368.9 192.9,370.1 193.6,370.0 194.3,369.2 195.0,368.4 195.7,368.2 196.4,368.4 197.1,370.0 197.8,370.3 198.5,369.3 199.2,368.5 199.9,369.7 200.6,370.0 201.3,369.6 202.0,369.4 202.7,368.3 203.4,369.0 204.1,370.5 204.8,369.9 205.5,369.9 206.2,368.6 206.9,369.5 207.6,368.0 208.3,369.5 209.0,370.2 209.7,369.6 210.4,368.9 211.1,368.6 211.8,368.5 212.5,368.3 213.2,368.4 213.9,370.2 214.6,368.7 215.3,369.4 216.0,369.1 216.7,368.6 217.4,369.3 218.1,368.1 218.8,369.4 219.5,368.5 220.2,369.6 220.9,368.8 221.6,370.2 222.3,368.0 223.0,369.2 223.7,368.6 224.4,368.1 225.1,369.7 225.8,368.7 226.5,370.0 227.2,369.6 227.9,370.2 228.6,368.6 229.3,369.9 230.0,368.8 230.7,369.6 231.4,370.4 232.1,369.7 232.8,369.8 233.5,368.5 234.2,370.3 234.9,368.3 235.6,368.4 236.3,369.7 237.0,369.8 237.7,368.9 238.4,370.2 239.1,370.3 239.8,368.5 240.5,370.1 241.2,370.1 241.9,368.2 242.6,368.5 243.3,368.1 244.0,369.8 244.7,370.4 245.4,369.5 246.1,369.1 246.8,369.8 247.5,370.2 248.2,368.4 248.9,369.9 249.6,369.2 250.3,368.5 251.0,370.1 251.7,368.7 252.4,369.2 253.1,368.2 253.8,370.0 254.5,369.0 255.2,368.2 255.9,368.5 256.6,369.3 257.3,368.6 258.0,369.9 258.7,368.9 259.4,370.1 260.1,368.4 260.8,369.4 261.5,370.2 262.2,368.8 262.9,368.4 263.6,368.8 264.3,368.8 265.0,369.8 265.7,368.3 266.4,370.0 267.1,368.5 267.8,368.5 268.5,369.0 269.2,369.3 269.9,368.4 270.6,369.9 271.3,369.4 272.0,368.6 272.7,369.9 273.4,369.7 274.1,368.8 274.8,369.0 275.5,369.6 276.2,369.1 276.9,369.7 277.6,369.6 278.3,369.2 279.0,377.3 279.7,387.1 280.4,394.5 281.1,396.2 281.8,397.8 282.5,399.5 283.2,401.2 283.9,402.9 284.6,404.5 285.3,406.2 286.0,407.9 286.7,409.6 287.4,411.2 288.1,412.9 288.8,414.6 289.5,416.3 290.2,417.9 290.9,419.6 291.6,421.3 292.3,423.0 293.0,424.6 293.7,426.3 294.4,428.0 295.1,427.9 295.8,427.5 296.5,428.4 297.2,427.9 297.9,427.5 298.6,427.6 299.3,427.2 300.0,427.4 300.7,427.8 301.4,428.1 302.1,428.5 302.8,428.6 303.5,428.5 304.2,426.8 304.9,427.3 305.6,427.3 306.3,427.1 307.0,427.1 307.7,428.4 308.4,428.4 309.1,428.2 309.8,427.7 310.5,427.3 311.2,427.8 311.9,427.1 312.6,427.9 313.3,428.5 314.0,428.1 314.7,427.6 315.4,428.1 316.1,428.0 316.1,482.9 315.4,464.7 314.7,467.7 314.0,467.7 313.3,467.1 312.6,466.8 311.9,466.1 311.2,461.8 310.5,461.2 309.8,470.7 309.1,472.8 308.4,466.7 307.7,480.7 307.0,472.0 306.3,478.1 305.6,466.9 304.9,460.0 304.2,473.8 303.5,464.7 302.8,466.1 302.1,472.0 301.4,479.9 300.7,468.6 300.0,461.8 299.3,467.3 298.6,463.0 297.9,467.1 297.2,472.9 296.5,463.8 295.8,476.8 295.1,480.7 294.4,454.3 293.7,459.0 293.0,446.6 292.3,450.4 291.6,446.0 290.9,456.0 290.2,440.8 289.5,443.1 288.8,439.6 288.1,437.0 287.4,432.9 286.7,439.1 286.0,435.2 285.3,433.7 284.6,433.6 283.9,429.3 283.2,434.7 282.5,428.5 281.8,426.1 281.1,422.2 280.4,432.7 279.7,415.8 279.0,414.0 278.3,408.8 277.6,409.1 276.9,408.7 276.2,408.4 275.5,406.3 274.8,416.4 274.1,406.8 273.4,409.1 272.7,422.1 272.0,423.7 271.3,409.3 270.6,410.4 269.9,408.2 269.2,409.2 268.5,415.7 267.8,405.3 267.1,406.9 266.4,409.4 265.7,428.2 265.0,425.0 264.3,426.4 263.6,406.2 262.9,404.3 262.2,421.6 261.5,404.6 260.8,406.1 260.1,416.7 259.4,416.8 258.7,405.0 258.0,414.0 257.3,409.4 256.6,421.9 255.9,422.1 255.2,408.3 254.5,422.3 253.8,407.8 253.1,415.9 252.4,409.8 251.7,412.5 251.0,424.7 250.3,407.0 249.6,418.1 248.9,408.9 248.2,403.2 247.5,416.8 246.8,406.5 246.1,408.6 245.4,404.9 244.7,420.8 244.0,406.0 243.3,405.1 242.6,406.7 241.9,414.0 241.2,407.4 240.5,414.0 239.8,403.7 239.1,408.7 238.4,419.1 237.7,421.1 237.0,408.3 236.3,414.9 235.6,403.2 234.9,409.6 234.2,403.9 233.5,406.7 232.8,407.1 232.1,410.2 231.4,420.0 230.7,414.2 230.0,422.4 229.3,421.3 228.6,427.7 227.9,403.5 227.2,409.0 226.5,406.6 225.8,408.3 225.1,416.7 224.4,415.1 223.7,403.9 223.0,409.7 222.3,418.0 221.6,416.5 220.9,404.8 220.2,408.0 219.5,409.8 218.8,408.7 218.1,407.7 217.4,405.8 216.7,408.4 216.0,418.1 215.3,411.6 214.6,409.5 213.9,409.3 213.2,409.8 212.5,409.0 211.8,409.3 211.1,411.4 210.4,404.7 209.7,403.1 209.0,404.1 208.3,408.8 207.6,403.3 206.9,407.7 206.2,429.7 205.5,416.5 204.8,405.8 204.1,407.6 203.4,408.2 202.7,415.0 202.0,423.0 201.3,421.1 200.6,407.3 199.9,408.5 199.2,423.7 198.5,404.9 197.8,404.7 197.1,406.9 196.4,408.9 195.7,415.5 195.0,427.1 194.3,427.2 193.6,426.9 192.9,418.4 192.2,408.8 191.5,406.4 190.8,418.7 190.1,409.4 189.4,405.6 188.7,403.7 188.0,405.9 187.3,415.1 186.6,408.8 185.9,409.1 185.2,410.3 184.5,412.2 183.8,408.1 183.1,416.8 182.4,424.7 181.7,405.3 181.0,405.8 180.3,421.8 179.6,408.0 178.9,420.2 178.2,410.0 177.5,411.6 176.8,404.2 176.1,418.5 175.4,425.2 174.7,406.1 174.0,409.3 173.3,412.6 172.6,405.9 171.9,409.5 171.2,420.6 170.5,413.4 169.8,431.9 169.1,407.5 168.4,425.6 167.7,408.8 167.0,406.9 166.3,405.1 165.6,411.7 164.9,404.8 164.2,403.9 163.5,413.2 162.8,404.1 162.1,407.0 161.4,408.7 160.7,406.1 160.0,409.8 159.3,426.2 158.6,403.9 157.9,422.2 157.2,409.0 156.5,417.1 155.8,428.8 155.1,412.9 154.4,404.8 153.7,414.9 153.0,408.7 152.3,415.1 151.6,414.1 150.9,406.0 150.2,406.6 149.5,409.4 148.8,427.6 148.1,403.4 147.4,414.4 146.7,416.7 146.0,407.5 145.3,420.8 144.6,408.7 143.9,406.4 143.2,429.6 142.5,403.5 141.8,414.6 141.1,404.7 140.4,413.4 139.7,425.7 139.0,424.9 138.3,422.1 137.6,407.6 136.9,404.8 136.2,405.3 135.5,407.1 134.8,409.9 134.1,405.3 133.4,408.8 132.7,403.5 132.0,406.1 131.3,410.2 130.6,423.8 129.9,428.4 129.2,424.9 128.5,403.3 127.8,426.5 127.1,408.8 126.4,406.1 125.7,411.6 125.0,414.9 124.3,418.1 123.6,406.2 122.9,416.3 122.2,406.8 121.5,408.8 120.8,405.9 120.1,406.1 119.4,417.2 118.7,406.2 118.0,415.2 117.3,403.7 116.6,405.6 115.9,406.9 115.2,415.0 114.5,404.9 113.8,423.1 113.1,406.3 112.4,417.6 111.7,427.1 111.0,403.7 110.3,430.2 109.6,424.5 108.9,410.7 108.2,411.8 107.5,424.1 106.8,407.5 106.1,404.8 105.4,412.0 104.7,426.4 104.0,406.2 103.3,407.2 102.6,423.2 101.9,403.9 101.2,404.2 100.5,411.2 99.8,406.2 99.1,404.2 98.4,407.8 97.7,411.3 97.0,414.5 96.3,406.3 95.6,404.7 94.9,415.9 94.2,407.3 93.5,428.5 92.8,421.2 92.1,405.4 91.4,404.9 90.7,408.6 90.0,404.7 89.3,407.7 88.6,406.7 87.9,424.9 87.2,408.1 86.5,408.0 85.8,404.8 85.1,408.1 84.4,405.9 83.7,407.5 83.0,411.1 82.3,426.9 81.6,409.6 80.9,414.9 80.2,413.2 79.5,422.8 78.8,437.7 78.1,443.8 77.4,439.8 76.7,439.6 76.0,443.0 75.3,418.9 74.6,423.7 73.9,426.0 73.2,423.5 72.5,430.7 71.8,433.7 71.1,430.6 70.4,473.4 69.7,468.8 69.0,464.3 68.3,467.9 67.6,471.5 66.9,466.4 66.2,473.1 65.5,475.8 64.8,462.3 64.1,475.5 63.4,473.8 62.7,479.3 62.0,469.4 61.3,475.5 60.6,467.8 59.9,470.9 59.2,471.2 58.5,475.0 57.8,468.5 57.1,462.4 56.4,464.4 55.7,466.6 55.0,467.8 54.3,465.8 53.6,467.2 52.9,483.9 52.2,466.2 51.5,464.9 50.8,484.1 50.1,464.4 49.4,463.2 48.7,466.6 48.0,477.3 47.3,489.1 46.6,470.8 45.9,471.1 45.2,484.2 44.5,472.3" fill="#00ffff"/><rect x="44.5" y="347.8" width="272" height="162" fill="none" stroke="#828282" stroke-width="2.6"/></svg>
<div class="t" style="right:613.5px;top:359.6px;font-size:10.3px;line-height:10.3px;font-weight:normal;color:#8c8c8c;letter-spacing:-0.35px;">-45</div>
<div class="t" style="right:613.5px;top:375.8px;font-size:10.3px;line-height:10.3px;font-weight:normal;color:#8c8c8c;letter-spacing:-0.35px;">-60</div>
<div class="t" style="right:613.5px;top:392.0px;font-size:10.3px;line-height:10.3px;font-weight:normal;color:#8c8c8c;letter-spacing:-0.35px;">-75</div>
<div class="t" style="right:613.5px;top:408.2px;font-size:10.3px;line-height:10.3px;font-weight:normal;color:#8c8c8c;letter-spacing:-0.35px;">-90</div>
<div class="t" style="right:613.5px;top:424.4px;font-size:10.3px;line-height:10.3px;font-weight:normal;color:#8c8c8c;letter-spacing:-0.35px;">-105</div>
<div class="t" style="right:613.5px;top:440.6px;font-size:10.3px;line-height:10.3px;font-weight:normal;color:#8c8c8c;letter-spacing:-0.35px;">-120</div>
<div class="t" style="right:613.5px;top:456.8px;font-size:10.3px;line-height:10.3px;font-weight:normal;color:#8c8c8c;letter-spacing:-0.35px;">-135</div>
<div class="t" style="right:613.5px;top:473.0px;font-size:10.3px;line-height:10.3px;font-weight:normal;color:#8c8c8c;letter-spacing:-0.35px;">-150</div>
<div class="t" style="right:613.5px;top:489.2px;font-size:10.3px;line-height:10.3px;font-weight:normal;color:#8c8c8c;letter-spacing:-0.35px;">-165</div>
<div class="t" style="left:10.0px;top:512.8px;font-size:12px;line-height:12px;font-weight:bold;color:#111;">Center 750 MHz</div>
<div class="t" style="right:337.4px;top:512.8px;font-size:12px;line-height:12px;font-weight:bold;color:#111;">Span 25.000076294 MHz</div>
<div class="t" style="left:10.0px;top:527.6px;font-size:12px;line-height:12px;font-weight:bold;color:#111;">Res BW 1.27312 kHz</div>
<div class="t" style="right:337.4px;top:527.6px;font-size:12px;line-height:12px;font-weight:bold;color:#111;">TimeLen 3.000023 ms</div>
<div class="t" style="left:332.5px;top:316.2px;font-size:11.8px;line-height:11.8px;font-weight:normal;color:#555;">Ch1 Error Summary (CC0)</div>
<div class="t" style="left:335.7px;top:337.6px;font-size:11.8px;line-height:11.8px;font-weight:normal;color:#7cdab4;letter-spacing:0.08px;">EVM</div>
<div class="t" style="left:495.5px;top:337.6px;font-size:11.8px;line-height:11.8px;font-weight:normal;color:#7cdab4;">=</div>
<div class="t" style="left:508.0px;top:337.8px;font-size:11.6px;line-height:11.6px;font-weight:normal;color:#7cdab4;letter-spacing:0.15px;">1.3181</div>
<div class="t" style="right:47.5px;top:337.6px;font-size:11.8px;line-height:11.8px;font-weight:normal;color:#7cdab4;">%rms</div>
<div class="t" style="left:615.3px;top:337.6px;font-size:11.8px;line-height:11.8px;font-weight:normal;color:#7cdab4;">at</div>
<div class="t" style="left:335.7px;top:351.8px;font-size:11.8px;line-height:11.8px;font-weight:normal;color:#7cdab4;letter-spacing:0.08px;">EVM Pk</div>
<div class="t" style="left:495.5px;top:351.8px;font-size:11.8px;line-height:11.8px;font-weight:normal;color:#7cdab4;">=</div>
<div class="t" style="left:508.0px;top:352.0px;font-size:11.6px;line-height:11.6px;font-weight:normal;color:#7cdab4;letter-spacing:0.15px;">41.289</div>
<div class="t" style="right:47.5px;top:351.8px;font-size:11.8px;line-height:11.8px;font-weight:normal;color:#7cdab4;">%</div>
<div class="t" style="left:615.3px;top:351.8px;font-size:11.8px;line-height:11.8px;font-weight:normal;color:#7cdab4;">at</div>
<div class="t" style="left:335.7px;top:366.0px;font-size:11.8px;line-height:11.8px;font-weight:normal;color:#7cdab4;letter-spacing:0.08px;">Data EVM</div>
<div class="t" style="left:495.5px;top:366.0px;font-size:11.8px;line-height:11.8px;font-weight:normal;color:#7cdab4;">=</div>
<div class="t" style="left:508.0px;top:366.2px;font-size:11.6px;line-height:11.6px;font-weight:normal;color:#7cdab4;letter-spacing:0.15px;">863.80</div>
<div class="t" style="right:45.5px;top:366.0px;font-size:11.8px;line-height:11.8px;font-weight:normal;color:#7cdab4;">m%rms</div>
<div class="t" style="left:337.3px;top:380.2px;font-size:11.8px;line-height:11.8px;font-weight:normal;color:#7cdab4;letter-spacing:0.08px;">- 3GPP-defined QPSK EVM</div>
<div class="t" style="left:495.5px;top:380.2px;font-size:11.8px;line-height:11.8px;font-weight:normal;color:#7cdab4;">=</div>
<div class="t" style="left:508.0px;top:380.4px;font-size:11.6px;line-height:11.6px;font-weight:normal;color:#7cdab4;letter-spacing:0.15px;">---</div>
<div class="t" style="left:337.3px;top:394.4px;font-size:11.8px;line-height:11.8px;font-weight:normal;color:#7cdab4;letter-spacing:0.08px;">- 3GPP-defined 16QAM EVM</div>
<div class="t" style="left:495.5px;top:394.4px;font-size:11.8px;line-height:11.8px;font-weight:normal;color:#7cdab4;">=</div>
<div class="t" style="left:508.0px;top:394.6px;font-size:11.6px;line-height:11.6px;font-weight:normal;color:#7cdab4;letter-spacing:0.15px;">---</div>
<div class="t" style="left:337.3px;top:408.6px;font-size:11.8px;line-height:11.8px;font-weight:normal;color:#7cdab4;letter-spacing:0.08px;">- 3GPP-defined 64QAM EVM</div>
<div class="t" style="left:495.5px;top:408.6px;font-size:11.8px;line-height:11.8px;font-weight:normal;color:#7cdab4;">=</div>
<div class="t" style="left:508.0px;top:408.8px;font-size:11.6px;line-height:11.6px;font-weight:normal;color:#7cdab4;letter-spacing:0.15px;">---</div>
<div class="t" style="left:335.7px;top:422.8px;font-size:11.8px;line-height:11.8px;font-weight:normal;color:#7cdab4;letter-spacing:0.08px;">RS EVM</div>
<div class="t" style="left:495.5px;top:422.8px;font-size:11.8px;line-height:11.8px;font-weight:normal;color:#7cdab4;">=</div>
<div class="t" style="left:508.0px;top:423.0px;font-size:11.6px;line-height:11.6px;font-weight:normal;color:#7cdab4;letter-spacing:0.15px;">542.55</div>
<div class="t" style="right:45.5px;top:422.8px;font-size:11.8px;line-height:11.8px;font-weight:normal;color:#7cdab4;">m%rms</div>
<div class="t" style="left:335.7px;top:437.0px;font-size:11.8px;line-height:11.8px;font-weight:normal;color:#7cdab4;letter-spacing:0.08px;">Channel Power</div>
<div class="t" style="left:495.5px;top:437.0px;font-size:11.8px;line-height:11.8px;font-weight:normal;color:#7cdab4;">=</div>
<div class="t" style="left:508.0px;top:437.2px;font-size:11.6px;line-height:11.6px;font-weight:normal;color:#7cdab4;letter-spacing:0.15px;">-17.315</div>
<div class="t" style="right:47.5px;top:437.0px;font-size:11.8px;line-height:11.8px;font-weight:normal;color:#7cdab4;">dBm</div>
<div class="t" style="left:335.7px;top:451.2px;font-size:11.8px;line-height:11.8px;font-weight:normal;color:#7cdab4;letter-spacing:0.08px;">RS Tx Power (Avg)</div>
<div class="t" style="left:495.5px;top:451.2px;font-size:11.8px;line-height:11.8px;font-weight:normal;color:#7cdab4;">=</div>
<div class="t" style="left:508.0px;top:451.4px;font-size:11.6px;line-height:11.6px;font-weight:normal;color:#7cdab4;letter-spacing:0.15px;">-46.729</div>
<div class="t" style="right:47.5px;top:451.2px;font-size:11.8px;line-height:11.8px;font-weight:normal;color:#7cdab4;">dBm</div>
<div class="t" style="left:335.7px;top:465.4px;font-size:11.8px;line-height:11.8px;font-weight:normal;color:#7cdab4;letter-spacing:0.08px;">OFDM Sym. Tx Power</div>
<div class="t" style="left:495.5px;top:465.4px;font-size:11.8px;line-height:11.8px;font-weight:normal;color:#7cdab4;">=</div>
<div class="t" style="left:508.0px;top:465.6px;font-size:11.6px;line-height:11.6px;font-weight:normal;color:#7cdab4;letter-spacing:0.15px;">-15.795</div>
<div class="t" style="right:47.5px;top:465.4px;font-size:11.8px;line-height:11.8px;font-weight:normal;color:#7cdab4;">dBm</div>
<div class="t" style="left:335.7px;top:479.6px;font-size:11.8px;line-height:11.8px;font-weight:normal;color:#7cdab4;letter-spacing:0.08px;">RS Rx Power (Avg)</div>
<div class="t" style="left:495.5px;top:479.6px;font-size:11.8px;line-height:11.8px;font-weight:normal;color:#7cdab4;">=</div>
<div class="t" style="left:508.0px;top:479.8px;font-size:11.6px;line-height:11.6px;font-weight:normal;color:#7cdab4;letter-spacing:0.15px;">-46.729</div>
<div class="t" style="right:47.5px;top:479.6px;font-size:11.8px;line-height:11.8px;font-weight:normal;color:#7cdab4;">dBm</div>
<div class="t" style="left:335.7px;top:493.8px;font-size:11.8px;line-height:11.8px;font-weight:normal;color:#7cdab4;letter-spacing:0.08px;">RSSI</div>
<div class="t" style="left:495.5px;top:493.8px;font-size:11.8px;line-height:11.8px;font-weight:normal;color:#7cdab4;">=</div>
<div class="t" style="left:508.0px;top:494.0px;font-size:11.6px;line-height:11.6px;font-weight:normal;color:#7cdab4;letter-spacing:0.15px;">-17.673</div>
<div class="t" style="right:47.5px;top:493.8px;font-size:11.8px;line-height:11.8px;font-weight:normal;color:#7cdab4;">dBm</div>
<div class="t" style="left:335.7px;top:508.0px;font-size:11.8px;line-height:11.8px;font-weight:normal;color:#7cdab4;letter-spacing:0.08px;">RS Rx Quality</div>
<div class="t" style="left:495.5px;top:508.0px;font-size:11.8px;line-height:11.8px;font-weight:normal;color:#7cdab4;">=</div>
<div class="t" style="left:508.0px;top:508.2px;font-size:11.6px;line-height:11.6px;font-weight:normal;color:#7cdab4;letter-spacing:0.15px;">-9.056</div>
<div class="t" style="right:51.0px;top:508.0px;font-size:11.8px;line-height:11.8px;font-weight:normal;color:#7cdab4;">dB</div>
<div style="position:absolute;left:332px;top:523.6px;width:302.5px;height:1.4px;background:#7cdab4;"></div>
<div style="position:absolute;left:634.5px;top:308px;width:12.5px;height:235.5px;background:#f2f2f2;border-left:1px solid #e4e4e4;box-sizing:border-box;"></div>
<div style="position:absolute;left:635.5px;top:320.5px;width:11px;height:106px;background:linear-gradient(90deg,#e6e6e6,#f8f8f8 40%,#d8d8d8);border:1px solid #c8c8c8;border-radius:1px;box-sizing:border-box;"></div>
<div style="position:absolute;left:638px;top:371px;width:6px;height:1px;background:#888;"></div>
<div style="position:absolute;left:638px;top:373px;width:6px;height:1px;background:#888;"></div>
<div style="position:absolute;left:638px;top:375px;width:6px;height:1px;background:#888;"></div>
<svg style="position:absolute;left:636px;top:311px" width="10" height="6"><path d="M2 5 L5 1.5 L8 5 Z" fill="#333"/></svg>
<svg style="position:absolute;left:636px;top:522.5px" width="10" height="6"><path d="M2 1 L5 4.5 L8 1 Z" fill="#555"/></svg>
<div style="position:absolute;left:329.5px;top:531.5px;width:317.5px;height:12px;background:#f2f2f2;border-top:1px solid #e4e4e4;border-bottom:1px solid #d8d8d8;box-sizing:border-box;"></div>
<div style="position:absolute;left:342.5px;top:532.5px;width:195px;height:11px;background:linear-gradient(180deg,#f4f4f4,#e2e2e2 60%,#cfcfcf);border:1px solid #c4c4c4;border-radius:2px;box-sizing:border-box;"></div>
<div style="position:absolute;left:437.5px;top:535px;width:1px;height:5px;background:#777;"></div>
<div style="position:absolute;left:439.5px;top:535px;width:1px;height:5px;background:#777;"></div>
<div style="position:absolute;left:441.5px;top:535px;width:1px;height:5px;background:#777;"></div>
<svg style="position:absolute;left:332px;top:533px" width="6" height="8"><path d="M4.5 1 L1 4 L4.5 7 Z" fill="#333"/></svg>
<svg style="position:absolute;left:625px;top:533px" width="6" height="8"><path d="M1.5 1 L5 4 L1.5 7 Z" fill="#333"/></svg>
</body></html>
